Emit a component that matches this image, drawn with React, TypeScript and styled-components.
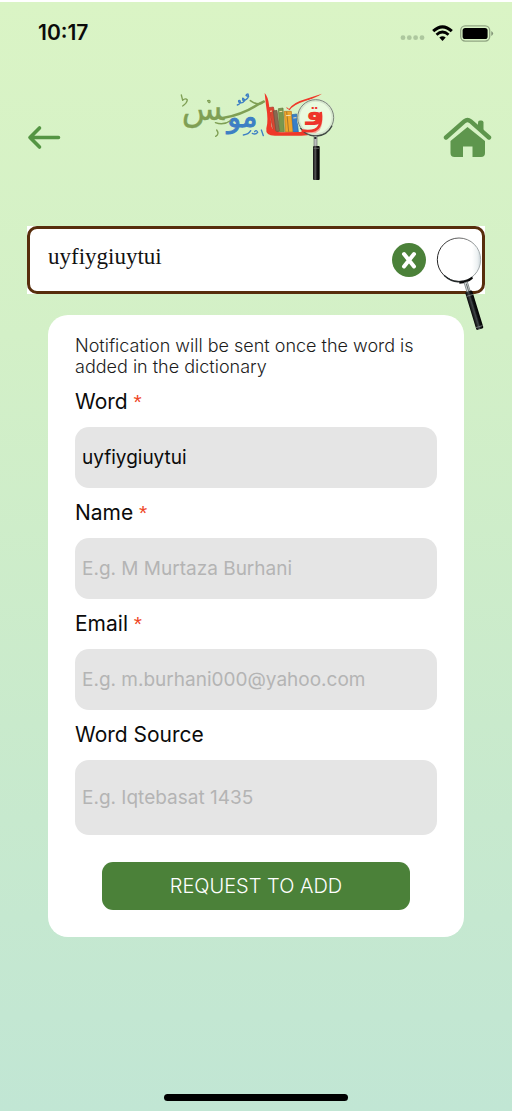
import React, { useState } from "react";
import styled, { createGlobalStyle } from "styled-components";

const GlobalStyle = createGlobalStyle`
  *, *::before, *::after { box-sizing: border-box; }
  body {
    margin: 0;
    font-family: Inter, "Liberation Sans", sans-serif;
    color: #0b0b0b;
  }
  button, input { font: inherit; }
`;

const Screen = styled.div`
  min-height: 100vh;
  display: flex;
  flex-direction: column;
  border-top: 2px solid #ffffff;
  background: linear-gradient(180deg, #daf4c5 0%, #d3f0c7 30%, #c9eacc 65%, #c1e6d4 100%);
`;

const StatusBar = styled.header`
  display: flex;
  align-items: center;
  justify-content: space-between;
  height: 62px;
  padding: 0 18px 0 38px;
`;

const Clock = styled.time`
  font-size: 21px;
  line-height: 24px;
  font-weight: 600;
`;

const StatusIcons = styled.div`
  display: flex;
  align-items: center;
  gap: 7px;
`;

const Dots = styled.svg`
  margin-top: 10px;
`;

const NavBar = styled.nav`
  display: grid;
  grid-template-columns: 1fr auto 1fr;
  align-items: center;
  height: 146px;
  padding: 0 20px 0 24px;
`;

const IconButton = styled.button`
  display: flex;
  padding: 0;
  border: 0;
  background: transparent;
  cursor: pointer;
`;

const HomeButton = styled(IconButton)`
  justify-self: end;
`;

const BackButton = styled(IconButton)`
  justify-self: start;
`;

const Main = styled.main`
  flex: 1;
  padding: 16px 27px 0;
`;

const SearchFrame = styled.form`
  background: #ffffff;
`;

const SearchBox = styled.div`
  position: relative;
  display: flex;
  align-items: center;
  height: 68px;
  padding: 0 56px 0 18px;
  border: 3px solid #572d0c;
  border-radius: 10px;
`;

const SearchInput = styled.input`
  flex: 1;
  min-width: 0;
  height: 56px;
  padding: 0 0 6px;
  border: 0;
  outline: 0;
  background: transparent;
  font-family: "Liberation Serif", serif;
  font-size: 23px;
  color: #111111;
`;

const SearchButton = styled(IconButton)`
  position: absolute;
  top: 6px;
  right: -8px;
`;

const Card = styled.form`
  display: flex;
  flex-direction: column;
  margin: 21px 21px 0;
  padding: 20px 27px 27px;
  border-radius: 20px;
  background: #ffffff;
`;

const Notice = styled.p`
  margin: 0;
  font-size: 18px;
  line-height: 21px;
  font-weight: 300;
  color: #1c1c1c;
`;

const Label = styled.label`
  height: 50px;
  font-size: 21px;
  line-height: 50px;
`;

const Required = styled.span`
  font-family: "Liberation Sans", sans-serif;
  color: #ee4423;
`;

const Field = styled.input<{ $tall?: boolean }>`
  width: 100%;
  height: ${(p) => (p.$tall ? 75 : 61)}px;
  padding: 0 7px;
  border: 0;
  border-radius: 14px;
  background: #e5e5e5;
  font-size: 19px;
  color: #0b0b0b;

  &::placeholder { color: #b4b4b4; opacity: 1; }
`;

const SubmitButton = styled.button`
  height: 48px;
  margin: 27px 27px 0;
  border: 0;
  border-radius: 11px;
  background: #4b8139;
  font-size: 20px;
  font-weight: 300;
  color: #ffffff;
  cursor: pointer;
`;

const Footer = styled.footer`
  display: flex;
  justify-content: center;
  padding: 20px 0 10px;
`;

const HomeIndicator = styled.div`
  width: 36%;
  height: 7px;
  border-radius: 4px;
  background: #000000;
`;

const Logo = () => (
  <svg width="175" height="114" viewBox="0 0 525 342" role="img" aria-label="Qamus dictionary">
    <defs>
      <linearGradient id="logoHandle" x1="0" x2="1">
        <stop offset="0" stopColor="#111" />
        <stop offset="0.35" stopColor="#555" />
        <stop offset="0.6" stopColor="#111" />
        <stop offset="1" stopColor="#000" />
      </linearGradient>
    </defs>
    <g fontFamily="DejaVu Sans, sans-serif" direction="rtl" textAnchor="middle">
      <text x="96" y="119" fontSize="100" fill="#7f9f54" stroke="#7f9f54" strokeWidth="1">{"\u200dس"}</text>
      <text x="214" y="142" fontSize="86" fill="#3d7fc4" stroke="#3d7fc4" strokeWidth="3">مو</text>
    </g>
    {/* calligraphic sweeps and vowel marks */}
    <g fill="none" strokeLinecap="round" strokeLinejoin="round">
      <path d="M155 114 Q212 105 260 74 L278 65" stroke="#7f9f54" strokeWidth="8" />
      <path d="M238 62 Q264 80 278 65" stroke="#7f9f54" strokeWidth="5" />
      <path d="M31 45 L35 61 Q44 53 49 60 Q47 71 35 78 M110 62 Q118 59 117 66 Q115 70 111 64 M133 128 Q158 137 178 122 M137 150 Q146 162 134 169" stroke="#7f9f54" strokeWidth="4" />
      <path d="M199 75 Q211 71 207 62 Q202 59 203 66 Q213 73 222 61 Q212 48 216 62 Q229 60 233 49 Q230 38 225 46 Q235 53 231 42 M217 165 Q233 163 239 152 M251 155 Q256 148 260 157 Q254 165 244 160 M271 150 Q274 158 277 167" stroke="#3d7fc4" strokeWidth="4" />
    </g>
    <g strokeLinejoin="round" strokeWidth="2">
      <path d="M292 83 L307 81 L325 154 L308 156 Z" fill="#d84531" stroke="#ae3528" />
      <path d="M307 93 L318 91 L326 153 L315 155 Z" fill="#896951" stroke="#6a503b" />
      <path d="M322 86 L336 84 L340 155 L326 155 Z" fill="#79974d" stroke="#607c3c" />
      <path d="M340 94 L361 94 L366 156 L343 156 Z" fill="#efa629" stroke="#bb711c" />
      <path d="M347 95 L353 155" stroke="#8a5d2a" />
      <path d="M363 104 L377 102 L382 156 L367 156 Z" fill="#387fc8" stroke="#2767a8" />
      <path d="M297 94 L303 93 M325 95 L334 94 M345 107 L359 106 M367 114 L376 113" stroke="#f8dfaa" strokeWidth="3" />
    </g>
    <path d="M281 39 Q291 50 294 74 L302 141 Q308 158 333 157 L386 156 Q424 156 437 143 Q451 132 450 93 Q460 129 446 151 Q429 167 391 167 L319 167 Q282 170 286 145 Q293 123 285 76 Q282 49 281 39Z" fill="#ef3829" />
    <path d="M345 83 Q349 82 354 87 Q368 67 402 58 L453 41 Q436 53 402 63 Q365 75 356 91 Z" fill="#ef3829" />
    <circle cx="434" cy="113" r="52" fill="#f5fff0" fillOpacity="0.6" stroke="#d6e6cf" strokeWidth="9" />
    <circle cx="434" cy="113" r="54" fill="none" stroke="#7c8879" strokeWidth="3" />
    <path d="M388 144 A55 55 0 0 0 483 137" fill="none" stroke="#3d4640" strokeWidth="4" />
    <path d="M392 152 Q434 158 444 139 Q453 122 449 96" fill="none" stroke="#ee352a" strokeWidth="8" />
    <g fontFamily="DejaVu Sans, sans-serif" direction="rtl" textAnchor="middle">
      <text x="430" y="134" fontSize="84" fontWeight="700" fill="#ee352a">{"ق\u200d"}</text>
    </g>
    <path d="M429 168 H438 V199 H429Z" fill="#bbbdbc" stroke="#6b706c" strokeWidth="2" />
    <path d="M430 171 H436 V177 H430Z" fill="#27302d" />
    <rect x="426" y="198" width="20" height="102" rx="3" fill="url(#logoHandle)" />
    <path d="M428 205 H444" stroke="#7f8280" strokeWidth="2" />
  </svg>
);

const Magnifier = () => (
  <svg width="56" height="100" viewBox="0 0 168 300" aria-hidden="true">
    <defs>
      <linearGradient id="rim" x1="0" x2="1">
        <stop offset="0" stopColor="#252525" />
        <stop offset="0.65" stopColor="#777" />
        <stop offset="1" stopColor="#abb3b5" />
      </linearGradient>
      <linearGradient id="glass" x1="0" x2="1">
        <stop offset="0.8" stopColor="#fff" />
        <stop offset="0.92" stopColor="#eef2f3" />
        <stop offset="1" stopColor="#cad4d8" />
      </linearGradient>
      <linearGradient id="grip" x1="0" x2="1">
        <stop offset="0" stopColor="#050505" />
        <stop offset="0.45" stopColor="#42474a" />
        <stop offset="0.65" stopColor="#121416" />
        <stop offset="1" stopColor="#000" />
      </linearGradient>
    </defs>
    <circle cx="75" cy="74" r="65" fill="url(#glass)" stroke="url(#rim)" strokeWidth="3" />
    <path d="M30 121 Q53 143 78 140 Q101 139 115 127" fill="none" stroke="#252a2b" strokeWidth="4" />
    <path d="M76 143 Q101 141 115 128" fill="none" stroke="#090909" strokeWidth="6" />
    <g transform="translate(95 141) rotate(-17)">
      <rect x="-5" y="1" width="10" height="34" fill="#d9dddd" stroke="#666e70" strokeWidth="2" />
      <rect x="-1" y="5" width="3" height="29" fill="#60696b" />
      <rect x="-11" y="29" width="22" height="119" rx="4" fill="url(#grip)" />
      <path d="M-10 42 H10 M-10 140 H10" stroke="#8b9090" strokeWidth="2" />
    </g>
  </svg>
);

type FieldSpec = {
  id: string;
  label: string;
  placeholder?: string;
  required?: boolean;
  tall?: boolean;
  type?: string;
};

const fields: FieldSpec[] = [
  { id: "word", label: "Word", required: true },
  { id: "name", label: "Name", placeholder: "E.g. M Murtaza Burhani", required: true },
  { id: "email", label: "Email", placeholder: "E.g. m.burhani000@yahoo.com", required: true, type: "email" },
  { id: "source", label: "Word Source", placeholder: "E.g. Iqtebasat 1435", tall: true },
];

export default function App() {
  const [query, setQuery] = useState("uyfiygiuytui");
  const [values, setValues] = useState<Record<string, string>>({ word: "uyfiygiuytui" });

  return (
    <>
      <GlobalStyle />
      <Screen>
        <StatusBar>
          <Clock>10:17</Clock>
          <StatusIcons>
            <Dots width="25" height="6" viewBox="0 0 25 6" fill="#adc79e" aria-hidden="true">
              <circle cx="3" cy="2.7" r="2.4" />
              <circle cx="9.3" cy="2.7" r="2.4" />
              <circle cx="15.6" cy="2.7" r="2.4" />
              <circle cx="22" cy="2.7" r="2.4" />
            </Dots>
            <svg width="21" height="17" viewBox="0 0 21 17" aria-hidden="true">
              <path d="M1.2 6.2 Q10.5 -2.5 19.8 6.2" fill="none" stroke="#000" strokeWidth="3" />
              <path d="M4.5 9.7 Q10.5 4.2 16.5 9.7" fill="none" stroke="#000" strokeWidth="2.8" />
              <path d="M7.3 12.5 Q10.5 9.8 13.7 12.5 L10.5 16 Z" fill="#000" />
            </svg>
            <svg width="34" height="17" viewBox="0 0 34 17" aria-hidden="true">
              <rect x="0.7" y="0.9" width="29" height="15.2" rx="4.5" fill="none" stroke="#91a583" strokeWidth="1.3" />
              <rect x="2.6" y="2.9" width="25" height="11.2" rx="2.6" fill="#000" />
              <path d="M31.3 6 Q35 8.5 31.3 11Z" fill="#829477" />
            </svg>
          </StatusIcons>
        </StatusBar>

        <NavBar>
          <BackButton type="button" aria-label="Back">
            <svg width="40" height="32" viewBox="0 0 40 32" fill="none" stroke="#549543" strokeWidth="3.6" strokeLinecap="round" strokeLinejoin="round">
              <path d="M34.5 16.5 H6 M15.5 7 L6 16.5 L15.5 26" />
            </svg>
          </BackButton>
          <Logo />
          <HomeButton type="button" aria-label="Home">
            <svg width="50" height="44" viewBox="0 0 50 44" fill="#5e964d">
              <path d="M4 22.5 L22.5 6.2 Q25.5 3.8 28.5 6.2 L47 22.5" fill="none" stroke="#5e964d" strokeWidth="4.4" strokeLinecap="round" />
              <path d="M36 12 V7.5 Q36 5.5 38 5.5 H39.5 Q41.5 5.5 41.5 7.5 V18 Z" />
              <path d="M8.5 26 L25.5 12 L43 26 V38 Q43 42 39 42 H30.5 V31.5 H21 V42 H12.5 Q8.5 42 8.5 38 Z" />
            </svg>
          </HomeButton>
        </NavBar>

        <Main>
          <SearchFrame onSubmit={(e) => e.preventDefault()}>
            <SearchBox>
              <SearchInput
                aria-label="Search the dictionary"
                value={query}
                spellCheck={false}
                onChange={(e) => setQuery(e.target.value)}
              />
              <IconButton type="button" aria-label="Clear search" onClick={() => setQuery("")}>
                <svg width="34" height="34" viewBox="0 0 34 34">
                  <circle cx="17" cy="17" r="17" fill="#4b8139" />
                  <path d="M12 11 L22 23.5 M22 11 L12 23.5" stroke="#fff" strokeWidth="4" strokeLinecap="round" />
                </svg>
              </IconButton>
              <SearchButton type="submit" aria-label="Search">
                <Magnifier />
              </SearchButton>
            </SearchBox>
          </SearchFrame>

          <Card onSubmit={(e) => e.preventDefault()}>
            <Notice>Notification will be sent once the word is added in the dictionary</Notice>
            {fields.map((f) => (
              <React.Fragment key={f.id}>
                <Label htmlFor={f.id}>
                  {f.label}
                  {f.required && <Required> *</Required>}
                </Label>
                <Field
                  id={f.id}
                  type={f.type ?? "text"}
                  placeholder={f.placeholder}
                  required={f.required}
                  $tall={f.tall}
                  spellCheck={false}
                  value={values[f.id] ?? ""}
                  onChange={(e) => setValues({ ...values, [f.id]: e.target.value })}
                />
              </React.Fragment>
            ))}
            <SubmitButton type="submit">REQUEST TO ADD</SubmitButton>
          </Card>
        </Main>

        <Footer>
          <HomeIndicator />
        </Footer>
      </Screen>
    </>
  );
}
